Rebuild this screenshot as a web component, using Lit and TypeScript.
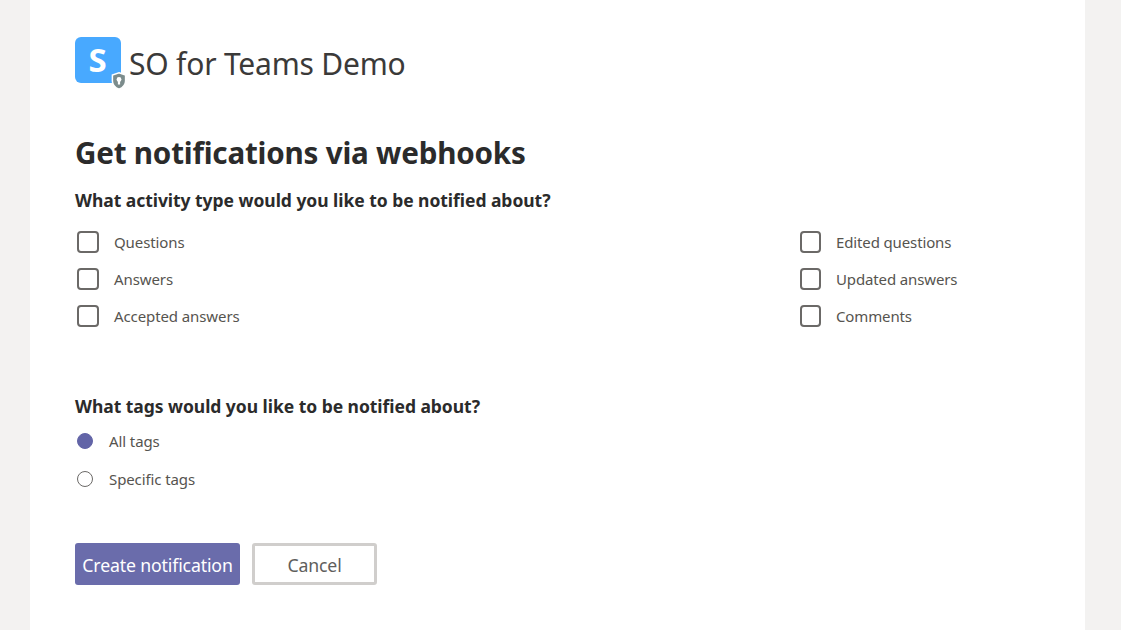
import { LitElement, html, css } from "lit";
import { customElement } from "lit/decorators.js";

@customElement("app-root")
export class AppRoot extends LitElement {
  static styles = css`
    :host { display: block; height: 630px; overflow: hidden; background: #f3f2f1; font-family: "Noto Sans", "Open Sans", sans-serif; color: #252423; }
    .card { box-sizing: border-box; margin: 0 36px 0 30px; height: 630px; background: #fff; padding: 37px 45px 0; }
    .brand { display: flex; align-items: center; gap: 8px; height: 50px; }
    .logo { position: relative; width: 46px; height: 46px; flex: none; margin-top: -4px; }
    .badge { position: absolute; right: -6px; bottom: -7px; }
    .name { font-size: 30px; letter-spacing: -0.2px; color: #3b3a39; line-height: 50px; white-space: nowrap; padding-top: 4px; }
    h1 { margin: 41px 0 0; font-size: 29.6px; line-height: 50px; font-weight: 700; letter-spacing: -0.2px; color: #2b2b2b; }
    h2 { margin: 0; font-size: 17.5px; line-height: 26px; font-weight: 700; letter-spacing: -0.04px; color: #2b2b2b; }
    .q1 { margin-top: 9px; }
    .checks { display: grid; grid-template-columns: 724px 1fr; margin-top: 17px; }
    .col { display: flex; flex-direction: column; gap: 13px; }
    .opt { display: flex; align-items: center; height: 24px; font-size: 15px; color: #56544f; letter-spacing: -0.1px; }
    .box { box-sizing: border-box; width: 22px; height: 22px; border: 2px solid #6b6967; border-radius: 4px; margin-left: 2px; flex: none; }
    .left .box { margin-right: 15px; }
    .right .box { width: 21px; margin-right: 15px; margin-left: 1px; }
    .right .opt { letter-spacing: -0.13px; }
    .q2 { margin-top: 65px; }
    .radios { display: flex; flex-direction: column; gap: 14px; margin-top: 10px; }
    .radio { box-sizing: border-box; width: 16px; height: 16px; border-radius: 50%; border: 1.5px solid #6b6967; margin: 0 16px 0 2px; flex: none; }
    .radio.on { background: #6264a7; border-color: #6264a7; }
    .actions { display: flex; gap: 12px; margin-top: 52px; }
    .btn { box-sizing: border-box; height: 42px; border-radius: 3px; font: inherit; font-size: 17.7px; letter-spacing: -0.15px; padding: 2px 0 0; }
    .primary { width: 165px; background: #6a6cab; border: none; color: #fff; }
    .secondary { width: 125px; background: #fff; border: 3px solid #d0cecc; color: #605e5c; }
  `;

  private opt(label: string, kind: string) {
    return html`<div class="opt"><span class=${kind}></span>${label}</div>`;
  }

  render() {
    return html`<div class="card">
      <div class="brand">
        <div class="logo">
          <svg width="46" height="46" viewBox="0 0 46 46" aria-hidden="true">
            <rect width="46" height="46" rx="6" fill="#48a9ff" />
            <text x="22.500" y="35" text-anchor="middle" fill="#fff" font-size="33" font-weight="700" font-family="Noto Sans, sans-serif">S</text>
          </svg>
          <svg class="badge" width="16" height="18" viewBox="0 0 16 18" aria-hidden="true">
            <path d="M8 .8 14.6 3v6c0 4-3 6.8-6.6 8.2C4.400 15.800 1.400 13 1.400 9V3z" fill="#7c8c8c" stroke="#fff" stroke-width="1.500" />
            <circle cx="8" cy="7.500" r="2.400" fill="#fff" />
            <rect x="6.900" y="8" width="2.200" height="4.500" fill="#fff" />
          </svg>
        </div>
        <div class="name">SO for Teams Demo</div>
      </div>
      <h1>Get notifications via webhooks</h1>
      <h2 class="q1">What activity type would you like to be notified about?</h2>
      <div class="checks">
        <div class="col left">
          ${["Questions", "Answers", "Accepted answers"].map((l) => this.opt(l, "box"))}
        </div>
        <div class="col right">
          ${["Edited questions", "Updated answers", "Comments"].map((l) => this.opt(l, "box"))}
        </div>
      </div>
      <h2 class="q2">What tags would you like to be notified about?</h2>
      <div class="radios">
        ${this.opt("All tags", "radio on")}
        ${this.opt("Specific tags", "radio")}
      </div>
      <div class="actions">
        <button class="btn primary">Create notification</button>
        <button class="btn secondary">Cancel</button>
      </div>
    </div>`;
  }
}
